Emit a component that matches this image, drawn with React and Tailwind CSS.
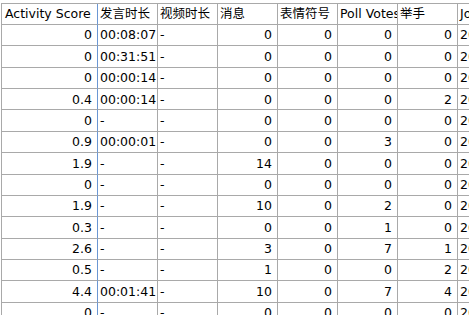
const cols = [
  { key: 'score', title: 'Activity Score', w: 'w-[96px]', align: 'right' },
  { key: 'speak', title: '发言时长', w: 'w-[60px]', align: 'left', split: true },
  { key: 'video', title: '视频时长', w: 'w-[60px]', align: 'left' },
  { key: 'msg', title: '消息', w: 'w-[60px]', align: 'right' },
  { key: 'emoji', title: '表情符号', w: 'w-[60px]', align: 'right' },
  { key: 'poll', title: 'Poll Votes', w: 'w-[60px]', align: 'right' },
  { key: 'hand', title: '举手', w: 'w-[60px]', align: 'right' },
  { key: 'join', title: 'Join Time', w: 'w-[90px]', align: 'left' },
]

const rows = [
  ['0', '00:08:07', '-', '0', '0', '0', '0', '2024-03-12 09:58'],
  ['0', '00:31:51', '-', '0', '0', '0', '0', '2024-03-12 09:59'],
  ['0', '00:00:14', '-', '0', '0', '0', '0', '2024-03-12 10:00'],
  ['0.4', '00:00:14', '-', '0', '0', '0', '2', '2024-03-12 10:00'],
  ['0', '-', '-', '0', '0', '0', '0', '2024-03-12 10:01'],
  ['0.9', '00:00:01', '-', '0', '0', '3', '0', '2024-03-12 10:01'],
  ['1.9', '-', '-', '14', '0', '0', '0', '2024-03-12 10:02'],
  ['0', '-', '-', '0', '0', '0', '0', '2024-03-12 10:02'],
  ['1.9', '-', '-', '10', '0', '2', '0', '2024-03-12 10:03'],
  ['0.3', '-', '-', '0', '0', '1', '0', '2024-03-12 10:03'],
  ['2.6', '-', '-', '3', '0', '7', '1', '2024-03-12 10:04'],
  ['0.5', '-', '-', '1', '0', '0', '2', '2024-03-12 10:05'],
  ['4.4', '00:01:41', '-', '10', '0', '7', '4', '2024-03-12 10:05'],
  ['0', '-', '-', '0', '0', '0', '0', '2024-03-12 10:06'],
]

function Cell({ col, children }) {
  return (
    <div
      className={
        col.w +
        ' h-full shrink-0 overflow-hidden whitespace-nowrap border-b border-[#a9a9a9] flex items-center pt-[1px] ' +
        (col.split ? 'border-l border-l-[#6b97d3] ' : 'border-l border-l-[#a9a9a9] ') +
        (col.align === 'right' ? 'justify-end pr-[5px]' : 'justify-start pl-[2px]')
      }
    >
      {children}
    </div>
  )
}

export default function App() {
  return (
    <div
      className="w-[469px] h-[315px] overflow-hidden bg-white text-black text-[12.5px] leading-none pt-[3px] pl-[1px]"
      style={{ fontFamily: '"DejaVu Sans", "Noto Sans CJK SC", sans-serif' }}
    >
      <div className="border-t border-[#a9a9a9] w-max">
        <div className="flex h-[21px]">
          {cols.map((c) => (
            <Cell key={c.key} col={{ ...c, align: 'left' }}>
              <span className={c.key === 'score' ? 'pl-[1px]' : ''}>{c.title}</span>
            </Cell>
          ))}
        </div>
        {rows.map((r, i) => (
          <div key={i} className="flex h-[21.36px]">
            {cols.map((c, j) => (
              <Cell key={c.key} col={c}>
                {r[j]}
              </Cell>
            ))}
          </div>
        ))}
      </div>
    </div>
  )
}
